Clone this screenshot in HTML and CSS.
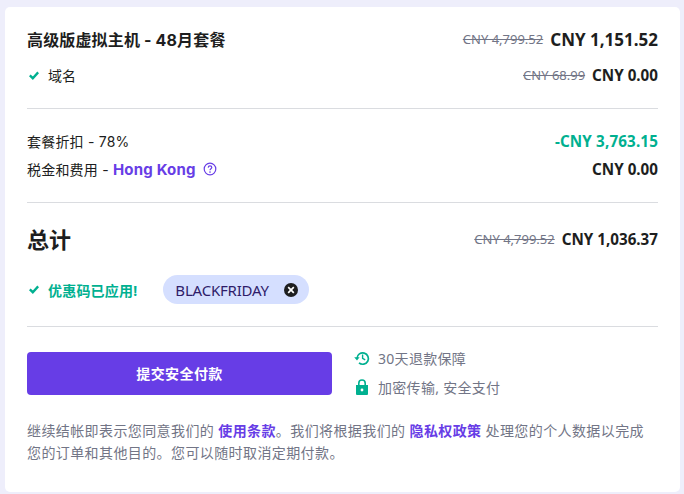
FILE: index.html
```html
<!DOCTYPE html>
<html>
  <head>
    <title>Order Summary</title>
    <link rel="stylesheet" href="styles.css">
  </head>
  <body>
    <div class="card">
      <div class="section section-items">
        <div class="row row-main">
          <span class="plan-name">高级版虚拟主机 - 48月套餐</span>
          <span class="prices">
            <s class="old-price">CNY 4,799.52</s>
            <b class="price-large">CNY 1,151.52</b>
          </span>
        </div>
        <div class="row row-domain">
          <span class="with-check">
            <svg class="check" viewBox="0 0 10 9" width="10" height="9"><path d="M.8 4.4 3.8 7.2 9.2 1.4" fill="none" stroke="#00b090" stroke-width="2.4"/></svg>
            域名
          </span>
          <span class="prices">
            <s class="old-price">CNY 68.99</s>
            <b class="price">CNY 0.00</b>
          </span>
        </div>
      </div>

      <div class="section section-fees">
        <div class="row row-fee">
          <span class="fee-label">套餐折扣 - 78%</span>
          <b class="price green">-CNY 3,763.15</b>
        </div>
        <div class="row row-fee">
          <span class="fee-label tax-label">税金和费用 - <b class="region">Hong Kong</b>
            <svg class="help" viewBox="0 0 14 14" width="14" height="14">
              <circle cx="7" cy="7" r="5.8" fill="none" stroke="#673de6" stroke-width="1.2"/>
              <path d="M5.2 5.6C5.3 4.5 6.1 3.9 7 3.9 8.1 3.9 8.8 4.6 8.8 5.5 8.8 6.7 7 6.8 7 8.3" fill="none" stroke="#673de6" stroke-width="1.2"/>
              <circle cx="7" cy="10.1" r=".8" fill="#673de6"/>
            </svg>
          </span>
          <b class="price">CNY 0.00</b>
        </div>
      </div>

      <div class="section section-total">
        <div class="row row-total">
          <span class="total-label">总计</span>
          <span class="prices total-prices">
            <s class="old-price">CNY 4,799.52</s>
            <b class="price">CNY 1,036.37</b>
          </span>
        </div>
        <div class="coupon">
          <span class="with-check coupon-note">
            <svg class="check" viewBox="0 0 10 9" width="10" height="9"><path d="M.8 4.4 3.8 7.2 9.2 1.4" fill="none" stroke="#00b090" stroke-width="2.4"/></svg>
            优惠码已应用!
          </span>
          <span class="chip">
            BLACKFRIDAY
            <svg class="chip-close" viewBox="0 0 14 14" width="14" height="14">
              <circle cx="7" cy="7" r="7" fill="#1d1e20"/>
              <path d="M4.2 4.2 9.8 9.8M9.8 4.2 4.2 9.8" stroke="#fff" stroke-width="1.7"/>
            </svg>
          </span>
        </div>
      </div>

      <div class="checkout">
        <button class="pay-button">提交安全付款</button>
        <div class="guarantees">
          <div class="guarantee">
            <svg viewBox="0 0 16 16" width="16" height="16">
              <path d="M3 8.2A5.7 5.7 0 1 1 5 12.9" fill="none" stroke="#00b090" stroke-width="1.7"/>
              <path d="M.2 7.2H5.6L3 10.4Z" fill="#00b090"/>
              <path d="M8.6 4.6V8.4L11.2 9.9" fill="none" stroke="#00b090" stroke-width="1.4"/>
            </svg>
            30天退款保障
          </div>
          <div class="guarantee">
            <svg viewBox="0 0 16 16" width="16" height="16">
              <path d="M2 6H14V15A1 1 0 0 1 13 16H3A1 1 0 0 1 2 15Z" fill="#00b090"/>
              <path d="M4.8 6.5V4.2A3.2 3.2 0 0 1 11.2 4.2V6.5" fill="none" stroke="#00b090" stroke-width="1.6"/>
              <circle cx="8" cy="11" r="1.4" fill="#fff"/>
            </svg>
            加密传输, 安全支付
          </div>
        </div>
      </div>

      <p class="terms">继续结帐即表示您同意我们的 <a href="#">使用条款</a>。我们将根据我们的 <a href="#">隐私权政策</a> 处理您的个人数据以完成<br>您的订单和其他目的。您可以随时取消定期付款。</p>
    </div>
  </body>
</html>
```

FILE: styles.css
```css
body {
  margin: 0;
  height: 494px;
  padding: 7px 4px 2px 5px;
  box-sizing: border-box;
  overflow: hidden;
  background-color: #eeeefb;
  color: #1d1e20;
  font-family: "Noto Sans", "Noto Sans CJK SC", sans-serif;
  font-size: 14px;
}

.card {
  height: 485px;
  padding: 0 22px;
  box-sizing: border-box;
  background-color: #fff;
  border-radius: 5px;
}

.section {
  border-bottom: 1px solid #dadce0;
}

.row {
  display: flex;
  justify-content: space-between;
  align-items: center;
}

.section-items {
  height: 102px;
  padding-top: 19px;
  box-sizing: border-box;
}

.row-main {
  height: 26px;
}

.row-domain {
  height: 26px;
  margin-top: 10px;
}

.plan-name {
  font-family: "Inter", "Noto Sans CJK SC", sans-serif;
  font-size: 16px;
  font-weight: 700;
  letter-spacing: 0.15px;
}

.prices {
  display: flex;
  align-items: center;
  gap: 7px;
}

.total-prices {
  margin-top: 2px;
}

.old-price {
  color: #727586;
  font-size: 13px;
}

.price {
  font-size: 15.2px;
  font-weight: 700;
}

.price-large {
  font-size: 17px;
  font-weight: 700;
}

.green {
  color: #00b090;
  letter-spacing: 0.15px;
}

.with-check {
  display: flex;
  align-items: center;
  gap: 9px;
  padding-left: 2px;
}

.section-fees {
  height: 94px;
  padding-top: 18px;
  box-sizing: border-box;
}

.row-fee {
  height: 28px;
}

.fee-label {
  font-family: "Inter", "Noto Sans CJK SC", sans-serif;
  letter-spacing: 0.2px;
}

.tax-label {
  display: flex;
  align-items: center;
  white-space: pre;
}

.region {
  color: #673de6;
  font-size: 15px;
  letter-spacing: 0.2px;
}

.help {
  margin-left: 7px;
}

.section-total {
  height: 124px;
  padding-top: 21px;
  box-sizing: border-box;
}

.row-total {
  height: 28px;
}

.total-label {
  font-size: 22px;
  font-weight: 700;
}

.coupon {
  display: flex;
  align-items: center;
  gap: 26px;
  margin-top: 23px;
}

.coupon-note {
  color: #00b090;
  font-weight: 700;
  letter-spacing: 0.2px;
}

.chip {
  display: flex;
  align-items: center;
  gap: 15px;
  height: 29px;
  padding: 0 11px 0 12px;
  border-radius: 15px;
  background-color: #d5dfff;
  color: #2f1c6a;
  font-size: 15px;
  letter-spacing: -0.2px;
}

.checkout {
  display: flex;
  gap: 22px;
  margin-top: 25px;
}

.pay-button {
  width: 305px;
  height: 43px;
  padding-bottom: 3px;
  border: none;
  border-radius: 4px;
  background-color: #673de6;
  color: #fff;
  font-family: inherit;
  font-size: 14px;
  font-weight: 700;
  letter-spacing: 0.4px;
}

.guarantees {
  display: flex;
  flex-direction: column;
  gap: 15px;
  margin-top: -1px;
}

.guarantee {
  display: flex;
  align-items: center;
  gap: 8px;
  height: 14px;
  color: #727586;
  letter-spacing: 0.3px;
}

.terms {
  margin: 25px 0 0;
  color: #727586;
  line-height: 22px;
  letter-spacing: 0.4px;
}

.terms a {
  color: #673de6;
  font-weight: 700;
  text-decoration: none;
}
```
